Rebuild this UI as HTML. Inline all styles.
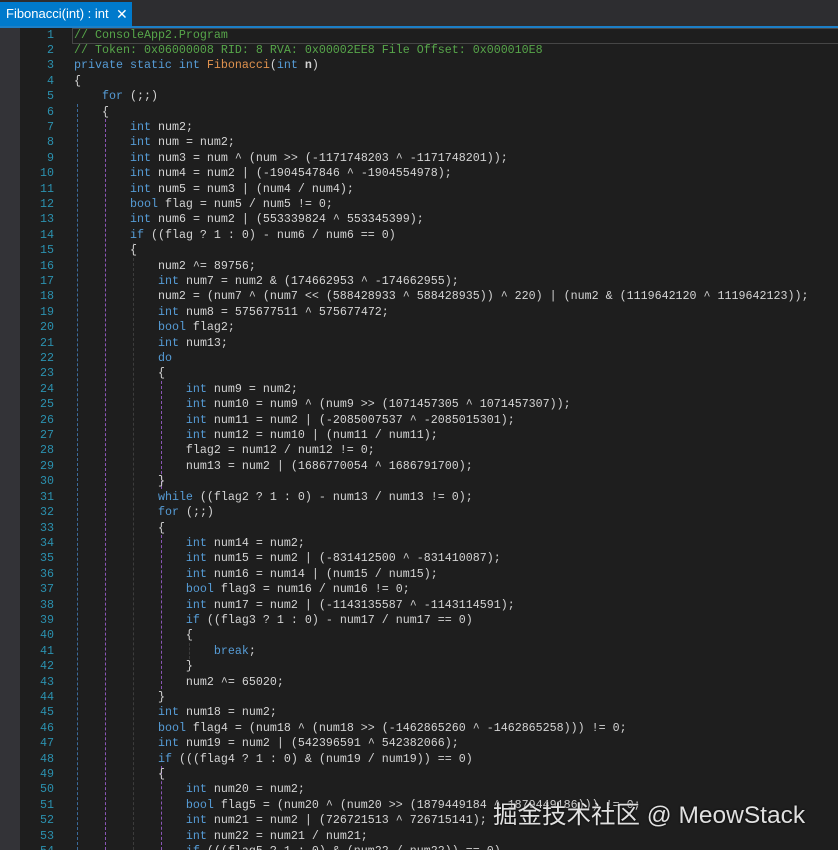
<!DOCTYPE html>
<html><head><meta charset="utf-8"><style>
html,body{margin:0;padding:0;background:#1e1e1e;width:838px;height:850px;overflow:hidden;position:relative}
.tabbar{position:absolute;left:0;top:0;width:838px;height:26px;background:#2d2d30}
.tab{position:absolute;left:0;top:2px;width:132px;height:24px;background:#007acc;color:#fff;font:13px "Liberation Sans",sans-serif;line-height:24px;padding-left:6px;box-sizing:border-box}
.tab .x{position:absolute;left:116px;top:0;font-size:14px}
.blue{position:absolute;left:0;top:26px;width:838px;height:2px;background:#1c7fc7}
.strip{position:absolute;left:0;top:28px;width:20px;height:822px;background:#333337}
.hl{position:absolute;left:72px;top:28px;width:766px;height:14px;border:1px solid #464646;border-right:none}
.code{position:absolute;left:0;top:27.5px;font:11.66px "Liberation Mono",monospace;line-height:15.4px;color:#d4d4d4;white-space:pre}
.ln{display:inline-block;width:54px;text-align:right;color:#2b91af;margin-right:20px}
.k{color:#569cd6}.c{color:#57a64a}.f{color:#e0924e}.b{font-weight:bold}
.g{position:absolute;width:0;border-left:1px dashed}
.wm{position:absolute;left:493px;top:796px;color:#e0e0e0;font:24.5px "Liberation Sans","Noto Sans CJK SC",sans-serif;text-shadow:0 0 2px #000}
</style></head><body>
<div class="tabbar"></div>
<div class="tab">Fibonacci(int) : int<span class="x">✕</span></div>
<div class="blue"></div>
<div class="strip"></div>
<div class="hl"></div>
<div class="g" style="left:77px;top:104px;height:746px;border-color:#3a6a9a"></div>
<div class="g" style="left:105px;top:119px;height:731px;border-color:#8a55b5"></div>
<div class="g" style="left:133px;top:243px;height:607px;border-color:#3c3c3c"></div>
<div class="g" style="left:161px;top:381px;height:108px;border-color:#8a55b5"></div>
<div class="g" style="left:161px;top:535px;height:154px;border-color:#8a55b5"></div>
<div class="g" style="left:161px;top:766px;height:84px;border-color:#8a55b5"></div>
<div class="g" style="left:189px;top:643px;height:16px;border-color:#3c3c3c"></div>
<div class="code"><span class="ln">1</span><span class="c">// ConsoleApp2.Program</span>
<span class="ln">2</span><span class="c">// Token: 0x06000008 RID: 8 RVA: 0x00002EE8 File Offset: 0x000010E8</span>
<span class="ln">3</span><span class="k">private static int</span> <span class="f">Fibonacci</span>(<span class="k">int</span> <span class="b">n</span>)
<span class="ln">4</span>{
<span class="ln">5</span>    <span class="k">for</span> (;;)
<span class="ln">6</span>    {
<span class="ln">7</span>        <span class="k">int</span> num2;
<span class="ln">8</span>        <span class="k">int</span> num = num2;
<span class="ln">9</span>        <span class="k">int</span> num3 = num ^ (num &gt;&gt; (-1171748203 ^ -1171748201));
<span class="ln">10</span>        <span class="k">int</span> num4 = num2 | (-1904547846 ^ -1904554978);
<span class="ln">11</span>        <span class="k">int</span> num5 = num3 | (num4 / num4);
<span class="ln">12</span>        <span class="k">bool</span> flag = num5 / num5 != 0;
<span class="ln">13</span>        <span class="k">int</span> num6 = num2 | (553339824 ^ 553345399);
<span class="ln">14</span>        <span class="k">if</span> ((flag ? 1 : 0) - num6 / num6 == 0)
<span class="ln">15</span>        {
<span class="ln">16</span>            num2 ^= 89756;
<span class="ln">17</span>            <span class="k">int</span> num7 = num2 &amp; (174662953 ^ -174662955);
<span class="ln">18</span>            num2 = (num7 ^ (num7 &lt;&lt; (588428933 ^ 588428935)) ^ 220) | (num2 &amp; (1119642120 ^ 1119642123));
<span class="ln">19</span>            <span class="k">int</span> num8 = 575677511 ^ 575677472;
<span class="ln">20</span>            <span class="k">bool</span> flag2;
<span class="ln">21</span>            <span class="k">int</span> num13;
<span class="ln">22</span>            <span class="k">do</span>
<span class="ln">23</span>            {
<span class="ln">24</span>                <span class="k">int</span> num9 = num2;
<span class="ln">25</span>                <span class="k">int</span> num10 = num9 ^ (num9 &gt;&gt; (1071457305 ^ 1071457307));
<span class="ln">26</span>                <span class="k">int</span> num11 = num2 | (-2085007537 ^ -2085015301);
<span class="ln">27</span>                <span class="k">int</span> num12 = num10 | (num11 / num11);
<span class="ln">28</span>                flag2 = num12 / num12 != 0;
<span class="ln">29</span>                num13 = num2 | (1686770054 ^ 1686791700);
<span class="ln">30</span>            }
<span class="ln">31</span>            <span class="k">while</span> ((flag2 ? 1 : 0) - num13 / num13 != 0);
<span class="ln">32</span>            <span class="k">for</span> (;;)
<span class="ln">33</span>            {
<span class="ln">34</span>                <span class="k">int</span> num14 = num2;
<span class="ln">35</span>                <span class="k">int</span> num15 = num2 | (-831412500 ^ -831410087);
<span class="ln">36</span>                <span class="k">int</span> num16 = num14 | (num15 / num15);
<span class="ln">37</span>                <span class="k">bool</span> flag3 = num16 / num16 != 0;
<span class="ln">38</span>                <span class="k">int</span> num17 = num2 | (-1143135587 ^ -1143114591);
<span class="ln">39</span>                <span class="k">if</span> ((flag3 ? 1 : 0) - num17 / num17 == 0)
<span class="ln">40</span>                {
<span class="ln">41</span>                    <span class="k">break</span>;
<span class="ln">42</span>                }
<span class="ln">43</span>                num2 ^= 65020;
<span class="ln">44</span>            }
<span class="ln">45</span>            <span class="k">int</span> num18 = num2;
<span class="ln">46</span>            <span class="k">bool</span> flag4 = (num18 ^ (num18 &gt;&gt; (-1462865260 ^ -1462865258))) != 0;
<span class="ln">47</span>            <span class="k">int</span> num19 = num2 | (542396591 ^ 542382066);
<span class="ln">48</span>            <span class="k">if</span> (((flag4 ? 1 : 0) &amp; (num19 / num19)) == 0)
<span class="ln">49</span>            {
<span class="ln">50</span>                <span class="k">int</span> num20 = num2;
<span class="ln">51</span>                <span class="k">bool</span> flag5 = (num20 ^ (num20 &gt;&gt; (1879449184 ^ 1879449186))) != 0;
<span class="ln">52</span>                <span class="k">int</span> num21 = num2 | (726721513 ^ 726715141);
<span class="ln">53</span>                <span class="k">int</span> num22 = num21 / num21;
<span class="ln">54</span>                <span class="k">if</span> (((flag5 ? 1 : 0) &amp; (num22 / num22)) == 0)</div>
<div class="wm">掘金技术社区 @ MeowStack</div>
</body></html>
